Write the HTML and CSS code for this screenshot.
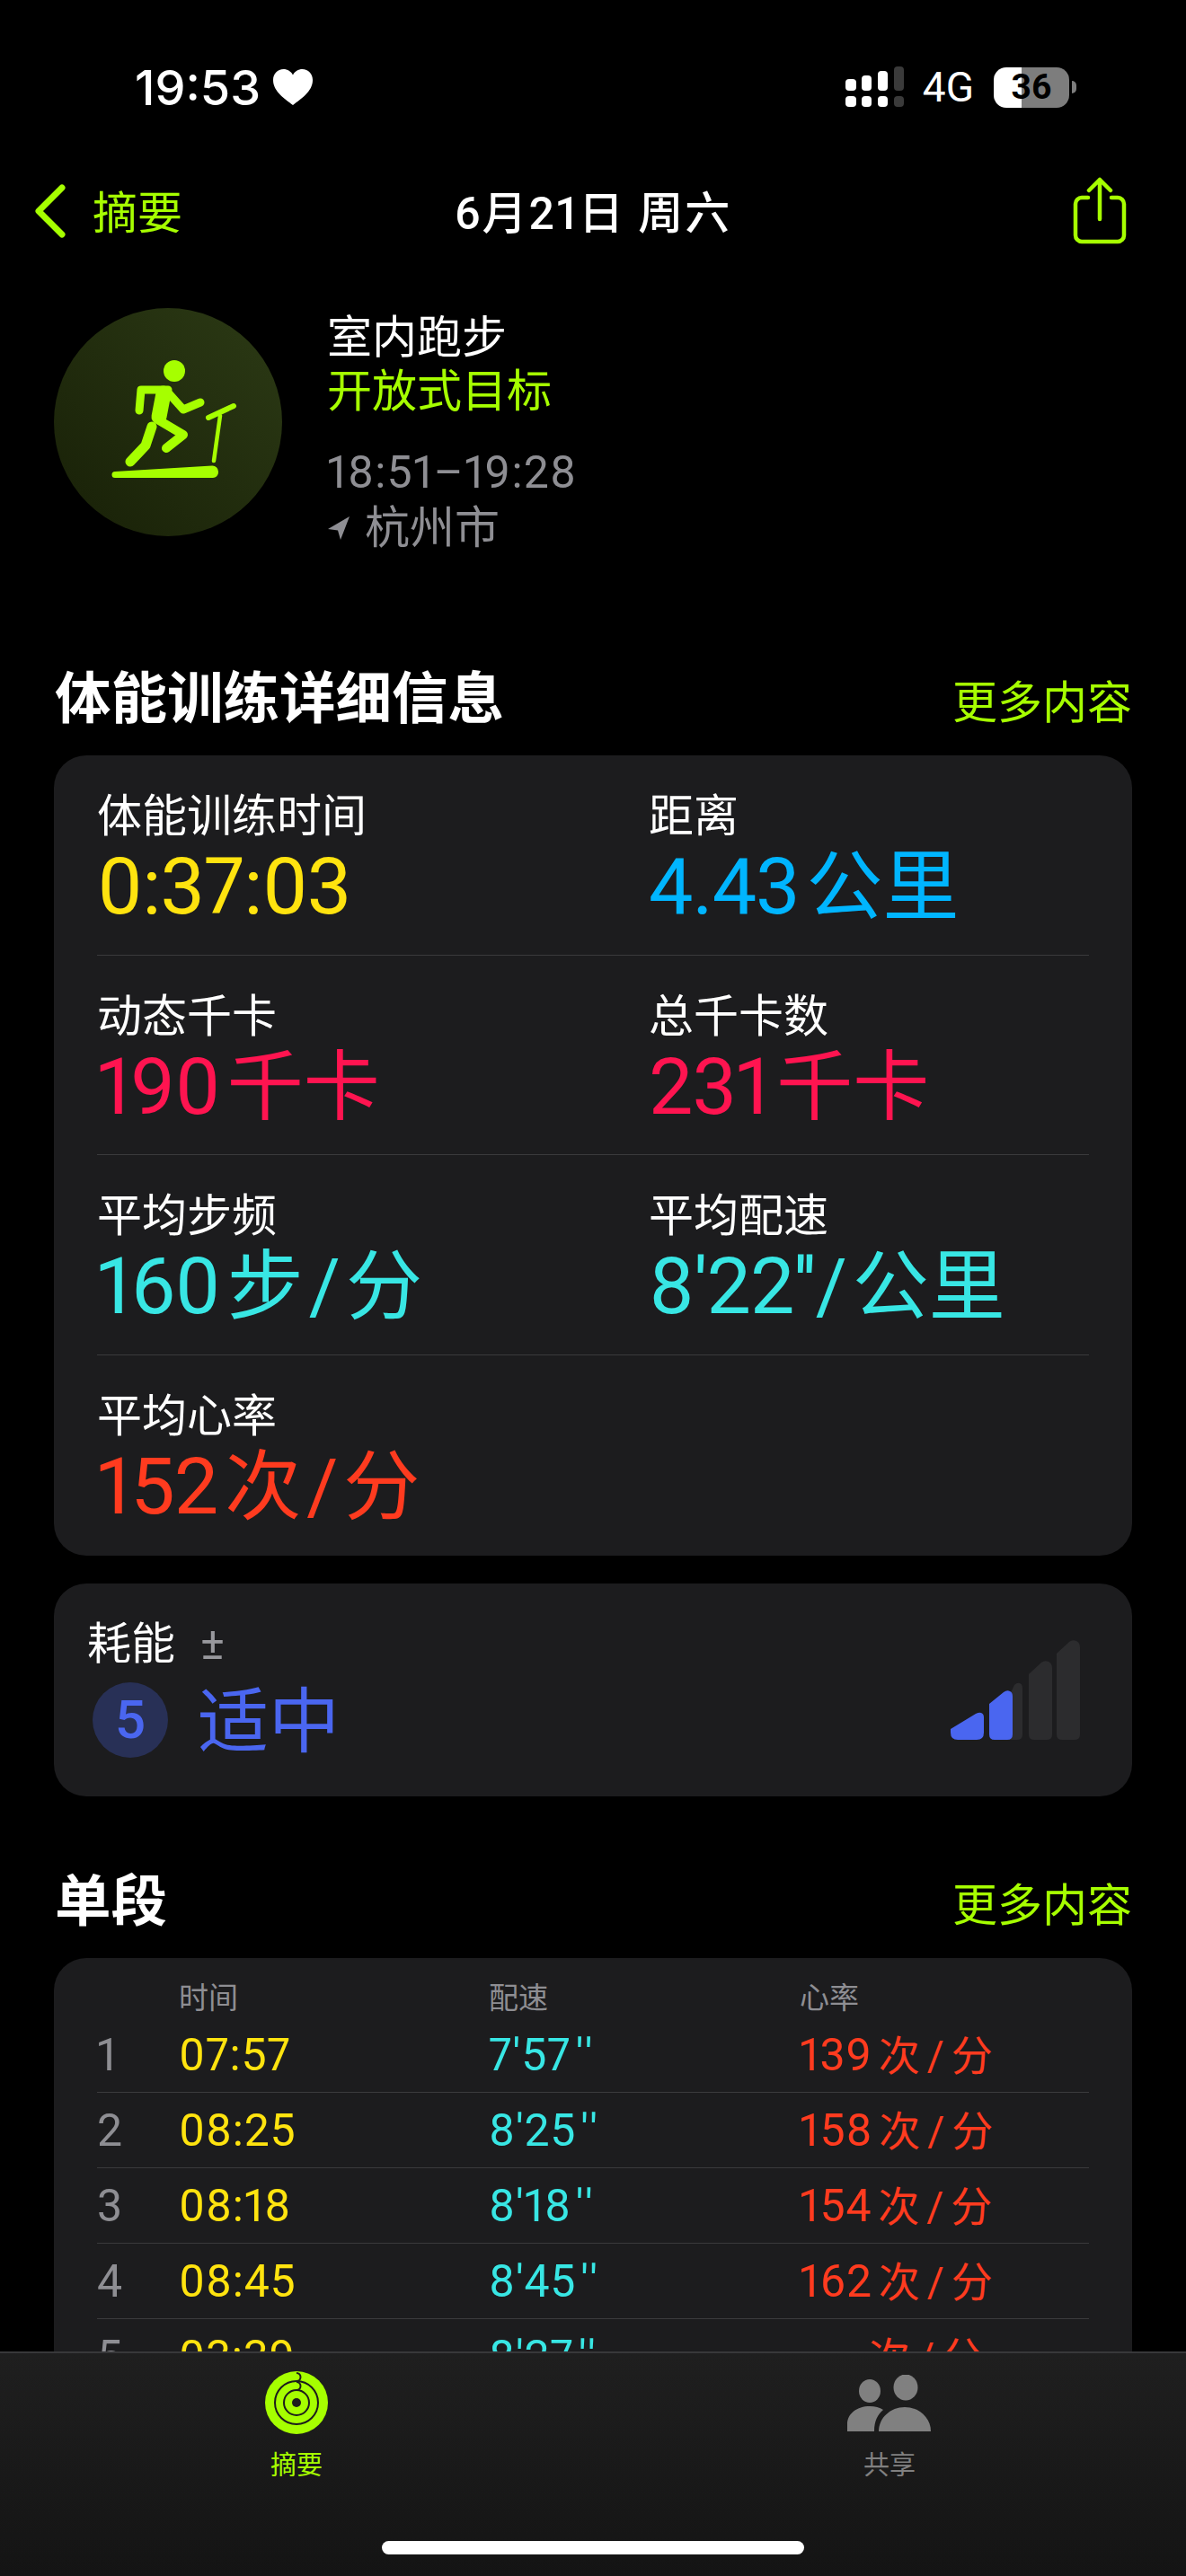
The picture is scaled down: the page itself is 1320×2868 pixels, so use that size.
FILE: index.html
```html
<!DOCTYPE html>
<html lang="zh-CN">
<head>
    <meta charset="UTF-8">
    <meta name="viewport" content="width=device-width, initial-scale=1.0">
    <title>体能训练详细信息</title>
    <link rel="stylesheet" href="styles.css">
</head>
<body>
    <div class="app">
        <div class="status-bar">
            <div class="status-left">
                <span class="clock">19:53</span>
                <svg class="heart" width="46" height="42" viewBox="0 0 46 42"><path fill="#fff" d="M23 41C14 34 1 26 1 13 1 6 6 1 12.500 1 17 1 21 3.500 23 7.500 25 3.500 29 1 33.500 1 40 1 45 6 45 13 45 26 32 34 23 41Z"/></svg>
            </div>
            <div class="status-right">
                <svg width="66" height="46" viewBox="0 0 66 46">
                    <g fill="#fff">
                        <rect x="0" y="14" width="12" height="13" rx="4"/><rect x="18" y="10" width="11" height="17" rx="4"/><rect x="36" y="5" width="11" height="22" rx="4"/>
                        <rect x="0" y="33" width="12" height="12" rx="4"/><rect x="18" y="33" width="11" height="12" rx="4"/><rect x="36" y="33" width="11" height="12" rx="4"/>
                    </g>
                    <g fill="#3a3a3a"><rect x="54" y="0" width="11" height="27" rx="4"/><rect x="54" y="33" width="11" height="12" rx="4"/></g>
                </svg>
                <span class="network">4G</span>
                <div class="battery"><span class="battery-level">36</span></div>
                <div class="battery-nub"></div>
            </div>
        </div>

        <div class="nav">
            <div class="nav-back">
                <svg width="36" height="60" viewBox="0 0 36 60"><path d="M31 4 5 30l26 26" fill="none" stroke="#a6ff00" stroke-width="7" stroke-linecap="round" stroke-linejoin="round"/></svg>
                <span>摘要</span>
            </div>
            <div class="nav-title">6月21日 周六</div>
            <svg class="share" width="60" height="76" viewBox="0 0 60 76" fill="none" stroke="#a6ff00" stroke-width="4.500" stroke-linecap="round" stroke-linejoin="round">
                <path d="M17 23H10a7 7 0 0 0-7 7v35a7 7 0 0 0 7 7h40a7 7 0 0 0 7-7V30a7 7 0 0 0-7-7H43"/>
                <path d="M30 47V3M18 15 30 3l12 12"/>
            </svg>
        </div>

        <div class="workout">
            <div class="workout-icon">
                <svg width="254" height="254" viewBox="0 0 254 254" fill="none" stroke="#a6ff00" stroke-linecap="round" stroke-linejoin="round">
                    <circle cx="134" cy="70" r="12" fill="#a6ff00" stroke="none"/>
                    <path stroke-width="9" d="M95 114 97 91H127"/>
                    <path stroke-width="17" d="M122 95 117 121"/>
                    <path stroke-width="10" d="M117 125 144 141 125 156"/>
                    <path stroke-width="9" d="M127 94 144 113 163 105"/>
                    <path stroke-width="11" d="M109 132 102 153 85 171"/>
                    <path stroke-width="4.500" d="M178 170 185 120"/>
                    <path stroke-width="6" d="M172 122 200 109"/>
                    <path fill="#a6ff00" stroke="none" d="M68 182 176 175.500a6.500 6.500 0 0 1 7 6.500v1a6 6 0 0 1-6 6H68a3.500 3.500 0 0 1 0-7Z"/>
                </svg>
            </div>
            <div class="workout-info">
                <div class="workout-name">室内跑步</div>
                <div class="workout-goal">开放式目标</div>
                <div class="workout-time">18:51–19:28</div>
                <div class="workout-place">
                    <svg width="26" height="28" viewBox="0 0 26 28"><path fill="#8e8e93" d="M25 1 1 15l11 1.500L15 27Z"/></svg>
                    <span>杭州市</span>
                </div>
            </div>
        </div>

        <div class="section-head first">
            <h2>体能训练详细信息</h2>
            <span class="more">更多内容</span>
        </div>
        <div class="card metrics">
            <div class="metric">
                <div class="metric-label">体能训练时间</div>
                <div class="metric-value yellow">0:37:03</div>
            </div>
            <div class="metric">
                <div class="metric-label">距离</div>
                <div class="metric-value blue">4.43<span class="unit">公里</span></div>
            </div>
            <div class="metric">
                <div class="metric-label">动态千卡</div>
                <div class="metric-value pink">190<span class="unit">千卡</span></div>
            </div>
            <div class="metric">
                <div class="metric-label">总千卡数</div>
                <div class="metric-value pink">231<span class="unit">千卡</span></div>
            </div>
            <div class="metric">
                <div class="metric-label">平均步频</div>
                <div class="metric-value cyan">160<span class="unit">步 / 分</span></div>
            </div>
            <div class="metric">
                <div class="metric-label">平均配速</div>
                <div class="metric-value cyan">8'22''<span class="unit tight">/ 公里</span></div>
            </div>
            <div class="metric">
                <div class="metric-label">平均心率</div>
                <div class="metric-value red">152<span class="unit">次 / 分</span></div>
            </div>
            <div class="metric"></div>
        </div>

        <div class="card effort">
            <div>
                <div class="effort-label">耗能<span class="plus-minus">±</span></div>
                <div class="effort-value">
                    <span class="effort-badge">5</span>
                    <span class="effort-text">适中</span>
                </div>
            </div>
            <svg class="effort-bars" width="146" height="112" viewBox="0 0 146 112">
                <path fill="#2c2c2e" d="M119 16 133 3q4-3 8-1 4 2 4 7V106q0 6-6 6H125q-6 0-6-6Z"/>
                <path fill="#2c2c2e" d="M88 39 102 26q4-3 8-1 4 2 4 7V106q0 6-6 6H94q-6 0-6-6Z"/>
                <path fill="#2c2c2e" d="M60 76 72 51q3-3 6-2 3 1 3 6V106q0 6-6 6H66q-6 0-6-6Z"/>
                <path fill="#4a66f0" d="M44 72 60 59q4-3 7-1 3 1 3 6V106q0 6-6 6H50q-6 0-6-6Z"/>
                <path fill="#4a66f0" d="M1 100 29 83q4-2 6-1 3 1 3 5V104q0 8-8 8H9q-8 0-8-8Z"/>
            </svg>
        </div>

        <div class="section-head">
            <h2>单段</h2>
            <span class="more">更多内容</span>
        </div>
        <div class="card splits">
            <div class="split-header">
                <span></span><span>时间</span><span>配速</span><span>心率</span>
            </div>
            <div class="split-row">
                <span class="split-no">1</span><span class="yellow">07:57</span><span class="cyan">7'57<span class="primes">''</span></span><span class="red">139<span class="split-unit">次 / 分</span></span>
            </div>
            <div class="split-row">
                <span class="split-no">2</span><span class="yellow">08:25</span><span class="cyan">8'25<span class="primes">''</span></span><span class="red">158<span class="split-unit">次 / 分</span></span>
            </div>
            <div class="split-row">
                <span class="split-no">3</span><span class="yellow">08:18</span><span class="cyan">8'18<span class="primes">''</span></span><span class="red">154<span class="split-unit">次 / 分</span></span>
            </div>
            <div class="split-row">
                <span class="split-no">4</span><span class="yellow">08:45</span><span class="cyan">8'45<span class="primes">''</span></span><span class="red">162<span class="split-unit">次 / 分</span></span>
            </div>
            <div class="split-row">
                <span class="split-no">5</span><span class="yellow">03:39</span><span class="cyan">8'27<span class="primes">''</span></span><span class="red empty-rate"><span class="split-unit">次 / 分</span></span>
            </div>
        </div>

        <div class="tab-bar">
            <div class="tab active">
                <svg width="70" height="70" viewBox="0 0 70 70">
                    <circle cx="35" cy="35" r="35" fill="#a6ff00"/>
                    <circle cx="35" cy="35" r="24" fill="none" stroke="#1c1c1c" stroke-width="2"/>
                    <circle cx="35" cy="35" r="14" fill="none" stroke="#1c1c1c" stroke-width="2"/>
                    <circle cx="35" cy="35" r="5" fill="#1c1c1c"/>
                    <path d="M35 2a4 4 0 0 1 0 9M35 12a4 4 0 0 1 0 9" fill="none" stroke="#1c1c1c" stroke-width="2"/>
                </svg>
                <span>摘要</span>
            </div>
            <div class="tab">
                <svg width="94" height="64" viewBox="0 0 94 64" fill="#808080">
                    <ellipse cx="25" cy="18" rx="12" ry="13"/>
                    <ellipse cx="65" cy="14" rx="13.500" ry="14.500"/>
                    <path d="M0 63V55C0 43 11 35 25 35c6 0 11 1.500 15 4-6 5-10 12-10 24Z"/>
                    <path d="M35 63c0-15 13-27 29-27s29 12 29 27Z"/>
                </svg>
                <span>共享</span>
            </div>
            <div class="home-indicator"></div>
        </div>
    </div>
</body>
</html>
```

FILE: styles.css
```css
* {
    box-sizing: border-box;
}

body {
    margin: 0;
    background-color: #000;
    color: #fff;
    font-family: Roboto, "Noto Sans CJK SC", sans-serif;
    font-variant-numeric: proportional-nums;
}

.app {
    position: relative;
    width: 1320px;
    height: 2868px;
    overflow: hidden;
    background-color: #000;
}

.yellow { color: #ffe30f; }
.blue { color: #00b5ff; }
.pink { color: #ff1450; }
.cyan { color: #38e6e4; }
.red { color: #ff3b1f; }

/* status bar */
.status-bar {
    display: flex;
    justify-content: space-between;
    align-items: center;
    height: 194px;
    padding: 0 122px 0 150px;
}

.status-left {
    display: flex;
    align-items: center;
    gap: 13px;
}

.clock {
    font-family: Inter, sans-serif;
    font-size: 54px;
    font-weight: 500;
}

.status-right {
    display: flex;
    align-items: center;
}

.network {
    margin-left: 20px;
    font-size: 46px;
}

.battery {
    width: 84px;
    height: 45px;
    margin-left: 22px;
    border-radius: 14px;
    background: linear-gradient(to right, #fff 37%, #7d7d7d 37%);
    color: #000;
    text-align: center;
    font-size: 39px;
    font-weight: 700;
    line-height: 45px;
}

.battery-level {
    display: block;
}

.battery-nub {
    width: 5px;
    height: 14px;
    margin-left: 3px;
    border-radius: 0 5px 5px 0;
    background-color: #7d7d7d;
}

/* nav row */
.nav {
    display: grid;
    grid-template-columns: 1fr auto 1fr;
    align-items: center;
    height: 82px;
    padding: 0 66px 0 38px;
}

.nav-back {
    display: flex;
    align-items: center;
    gap: 29px;
    color: #a6ff00;
    font-size: 50px;
    line-height: 56px;
}

.nav-back span {
    margin-top: 6px;
}

.nav-title {
    margin: -5px 0 0 28px;
    font-size: 50px;
    font-weight: 500;
    letter-spacing: 2px;
}

.share {
    justify-self: end;
}

/* workout header */
.workout {
    display: flex;
    gap: 50px;
    height: 254px;
    margin: 67px 0 0 60px;
}

.workout-icon {
    width: 254px;
    height: 254px;
    border-radius: 50%;
    background: linear-gradient(to top right, #182007, #2c3a15);
}

.workout-info {
    font-size: 50px;
    line-height: 60px;
}

.workout-name {
    margin-top: 3px;
}

.workout-goal {
    color: #a6ff00;
}

.workout-time {
    margin-top: 30px;
    color: #8e8e93;
    letter-spacing: 1.200px;
}

.workout-place {
    display: flex;
    align-items: center;
    gap: 16px;
    margin-top: 2px;
    color: #8e8e93;
}

/* section headings */
.section-head {
    display: flex;
    justify-content: space-between;
    align-items: center;
    height: 70px;
    margin-top: 80px;
    padding: 0 60px 0 61px;
}

.section-head.first {
    margin-top: 144px;
}

.section-head h2 {
    margin: 5px 0 0;
    font-size: 62.500px;
    font-weight: 700;
    line-height: 76px;
}

.more {
    margin-top: 3px;
    color: #a6ff00;
    font-size: 50px;
}

/* cards */
.card {
    margin: 30px 60px 0;
    border-radius: 36px;
    background-color: #1c1c1e;
}

.metrics {
    display: grid;
    grid-template-columns: 614px 1fr;
    grid-auto-rows: 222.500px;
    height: 891px;
    padding: 0 48px;
}

.metric {
    padding-top: 40px;
    border-bottom: 1px solid #3a3a3c;
}

.metric:nth-last-child(-n+2) {
    border-bottom: none;
}

.metric-label {
    font-size: 50px;
    line-height: 56px;
}

.metric-value {
    font-size: 88px;
    line-height: 100px;
    letter-spacing: -1px;
}

.unit {
    margin-left: 8px;
    font-size: 85px;
    letter-spacing: 0;
    word-spacing: -15px;
}

.unit.tight {
    margin-left: 0;
}

/* effort card */
.effort {
    display: flex;
    justify-content: space-between;
    height: 237px;
    margin-top: 31px;
    padding: 39px 57px 0 37px;
}

.effort-label {
    font-size: 49px;
    line-height: 56px;
}

.plus-minus {
    margin-left: 28px;
    color: #98989d;
    font-size: 50px;
}

.effort-value {
    display: flex;
    align-items: center;
    gap: 33px;
    margin: 7px 0 0 6px;
}

.effort-badge {
    width: 84px;
    height: 84px;
    border-radius: 50%;
    background-color: #283056;
    color: #4a66f0;
    text-align: center;
    font-size: 60px;
    font-weight: 500;
    line-height: 84px;
}

.effort-text {
    margin-top: 7px;
    color: #4a66f0;
    font-size: 79px;
    line-height: 90px;
}

.effort-bars {
    margin-top: 23px;
}

/* splits */
.splits {
    padding: 0 48px;
}

.split-header,
.split-row {
    display: grid;
    grid-template-columns: 91px 345px 346px 1fr;
}

.split-header {
    align-items: center;
    height: 66px;
    padding-top: 18px;
    color: #8e8e93;
    font-size: 33px;
}

.split-row {
    align-items: center;
    height: 84px;
    border-bottom: 1px solid #3a3a3c;
    font-size: 50px;
    line-height: 60px;
    letter-spacing: 0.800px;
}

.split-row:first-of-type {
    height: 83px;
}

.split-no {
    color: #8e8e93;
}

.primes {
    margin-left: 5px;
    letter-spacing: 4px;
}

.split-unit {
    margin-left: 7px;
    font-size: 46px;
    word-spacing: -5px;
}

.split-row .red {
    margin-top: 1px;
}

.empty-rate {
    padding-left: 70px;
}

/* tab bar */
.tab-bar {
    position: absolute;
    left: 0;
    right: 0;
    bottom: 0;
    display: grid;
    grid-template-columns: 660px 660px;
    height: 250px;
    border-top: 2px solid #38383a;
    background: linear-gradient(to bottom, #1f1f1f, #141414);
}

.tab {
    display: flex;
    flex-direction: column;
    align-items: center;
    padding-top: 24px;
    color: #808080;
    font-size: 29px;
}

.tab span {
    margin-top: 13px;
}

.tab.active {
    padding-top: 20px;
    color: #a6ff00;
}

.tab.active span {
    margin-top: 11px;
}

.home-indicator {
    position: absolute;
    left: 425px;
    bottom: 24px;
    width: 470px;
    height: 15px;
    border-radius: 8px;
    background-color: #fff;
}
```
